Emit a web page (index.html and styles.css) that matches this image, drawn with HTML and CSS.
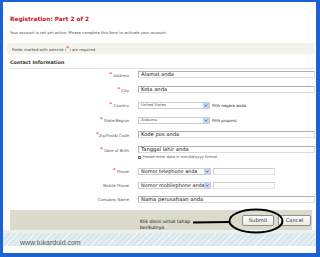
FILE: index.html
```html
<!DOCTYPE html>
<html>
<head>
<meta charset="utf-8">
<link rel="stylesheet" href="styles.css">
</head>
<body>
<div class="page">
  <h1 class="title">Registration: Part 2 of 2</h1>
  <p class="intro">Your account is not yet active. Please complete this form to activate your account.</p>
  <div class="notice">Fields marked with asterisk (<span class="req">*</span>) are required.</div>
  <h2 class="section">Contact Information</h2>
  <div class="form">
    <div class="row r-first"><div class="lbl"><span class="req">*</span> Address</div><div class="field">Alamat anda</div></div>
    <div class="row"><div class="lbl"><span class="req">*</span> City</div><div class="field">Kota anda</div></div>
    <div class="row"><div class="lbl"><span class="req">*</span> Country</div>
      <div class="ctrl"><div class="select s-country"><span class="sv">United States</span><span class="arr"><svg width="6" height="5" viewBox="0 0 6 5"><path d="M1.5 1.8 L3 3.2 L4.5 1.8" fill="none" stroke="#3b62c4" stroke-width="0.9"/></svg></span></div><span class="hint">Pilih negara anda</span></div></div>
    <div class="row"><div class="lbl"><span class="req">*</span> State/Region</div>
      <div class="ctrl"><div class="select s-country"><span class="sv">Alabama</span><span class="arr"><svg width="6" height="5" viewBox="0 0 6 5"><path d="M1.5 1.8 L3 3.2 L4.5 1.8" fill="none" stroke="#3b62c4" stroke-width="0.9"/></svg></span></div><span class="hint">Pilih propinsi</span></div></div>
    <div class="row"><div class="lbl"><span class="req">*</span>Zip/Postal Code</div><div class="field">Kode pos anda</div></div>
    <div class="row"><div class="lbl"><span class="req">*</span> Date of Birth</div><div class="field">Tanggal lahir anda</div></div>
    <div class="row r-note"><div></div><div class="note"><span class="nicon"></span>Please enter date in mm/dd/yyyy format.</div></div>
    <div class="row r-phone"><div class="lbl"><span class="req">*</span> Phone</div>
      <div class="ctrl"><div class="select s-phone"><span class="sv dark">Nomor telephone anda</span><span class="arr"><svg width="6" height="5" viewBox="0 0 6 5"><path d="M1.5 1.8 L3 3.2 L4.5 1.8" fill="none" stroke="#3b62c4" stroke-width="0.9"/></svg></span></div><div class="field f-small"></div></div></div>
    <div class="row"><div class="lbl">Mobile Phone</div>
      <div class="ctrl"><div class="select s-phone"><span class="sv dark">Nomor mobilephone anda</span><span class="arr"><svg width="6" height="5" viewBox="0 0 6 5"><path d="M1.5 1.8 L3 3.2 L4.5 1.8" fill="none" stroke="#3b62c4" stroke-width="0.9"/></svg></span></div><div class="field f-small"></div></div></div>
    <div class="row r-company"><div class="lbl">Company Name</div><div class="field">Nama perusahaan anda</div></div>
  </div>
  <div class="actions">
    <div class="klik">Klik disini untuk tahap<br>berikutnya</div>
    <div class="buttons"><span class="btn b-submit">Submit</span><span class="btn b-cancel">Cancel</span></div>
    <svg class="annot" width="302" height="20" viewBox="0 0 302 20">
      <line x1="183" y1="12.5" x2="220" y2="12" stroke="#000" stroke-width="2"/>
      <ellipse cx="246" cy="11" rx="26.5" ry="11.5" fill="none" stroke="#000" stroke-width="2"/>
    </svg>
  </div>
  <div class="footer">www.tukarduid.com</div>
</div>
</body>
</html>
```
FILE: styles.css
```css
body {
  margin: 0;
  background: #1b62d3;
  font-family: "DejaVu Sans", Verdana, sans-serif;
}
.page {
  margin: 2px 0 0 3px;
  width: 313px;
  height: 251px;
  background: #fff;
  overflow: hidden;
}
.title {
  margin: 0;
  padding: 13px 0 0 7px;
  font-size: 5.8px;
  line-height: 8px;
  font-weight: bold;
  color: #c8141e;
}
.intro {
  margin: 7px 0 0 7px;
  font-size: 3.8px;
  line-height: 6px;
  color: #444;
}
.notice {
  box-sizing: border-box;
  margin: 7px 0 0 4px;
  width: 308px;
  height: 11px;
  padding-left: 5px;
  background: #f3f3ec;
  font-size: 3.8px;
  line-height: 11px;
  color: #444;
}
.section {
  margin: 5px 0 0 7px;
  width: 305px;
  padding-bottom: 2px;
  border-bottom: 1px solid #e2e2d8;
  font-size: 4.8px;
  line-height: 7px;
  font-weight: bold;
  color: #33332a;
}
.req {
  color: #e01010;
  font-size: 5.5px;
  vertical-align: 1px;
}
.row {
  display: grid;
  grid-template-columns: 127px 178px;
  column-gap: 8px;
  height: 7px;
  margin-top: 8px;
}
.r-first { margin-top: 2px; }
.r-note { margin-top: 2px; height: 5px; }
.r-phone { margin-top: 7px; }
.r-company { margin-top: 7px; }
.lbl {
  text-align: right;
  padding-right: 1px;
  font-size: 3.9px;
  line-height: 7px;
  color: #555;
  white-space: nowrap;
}
.lbl .req { line-height: 7px; }
.field {
  box-sizing: border-box;
  width: 177px;
  height: 7px;
  padding-left: 2px;
  border: 1px solid;
  border-color: #b0b0b0 #dcdcdc #dcdcdc #b0b0b0;
  font-size: 5.2px;
  line-height: 5px;
  color: #111;
  white-space: nowrap;
  overflow: hidden;
}
.ctrl {
  display: flex;
  align-items: center;
  gap: 2px;
}
.select {
  box-sizing: border-box;
  display: flex;
  align-items: center;
  height: 7px;
  border: 1px solid #cdcdcd;
  background: #fff;
  overflow: hidden;
}
.s-country { width: 72px; }
.s-phone { width: 73px; }
.sv {
  flex: 1;
  padding-left: 2px;
  font-size: 3.7px;
  line-height: 5px;
  color: #555;
  white-space: nowrap;
  overflow: hidden;
}
.sv.dark {
  font-size: 4.9px;
  color: #111;
}
.arr {
  flex: none;
  display: flex;
  width: 6px;
  height: 5px;
  background: #c6d5f6;
}
.hint {
  font-size: 3.9px;
  color: #222;
  white-space: nowrap;
}
.f-small {
  width: 62px;
  border-color: #cccccc #e2e2e2 #e2e2e2 #cccccc;
}
.note {
  display: flex;
  align-items: center;
  gap: 1.5px;
  font-size: 3.7px;
  line-height: 5px;
  color: #555;
  white-space: nowrap;
}
.nicon {
  box-sizing: border-box;
  width: 3px;
  height: 3px;
  border: 1px solid #666;
  background: #fff;
}
.actions {
  position: relative;
  display: flex;
  margin: 7px 0 0 7px;
  width: 302px;
  height: 20px;
  background: #dbdbcd;
}
.klik {
  margin-left: 130px;
  padding-top: 9px;
  font-size: 4.5px;
  line-height: 6px;
  color: #111;
  white-space: nowrap;
}
.buttons {
  display: flex;
  gap: 4px;
  margin-left: auto;
  padding: 5px 1px 0 0;
}
.btn {
  box-sizing: border-box;
  height: 11px;
  border: 1px solid #8e8e8e;
  border-radius: 2px;
  background: linear-gradient(#ffffff, #ebeae3);
  font-size: 5.2px;
  line-height: 9px;
  text-align: center;
  color: #333;
}
.b-submit { width: 32px; }
.b-cancel { width: 33px; }
.annot {
  position: absolute;
  left: 0;
  top: 0;
  overflow: visible;
}
.footer {
  height: 23px;
  box-sizing: border-box;
  padding: 9px 0 0 17px;
  font-family: "Liberation Sans", Arial, sans-serif;
  font-size: 7px;
  line-height: 8px;
  color: #5a5a5a;
  background:
    linear-gradient(#edf0ea, #edf0ea) 0 0 / 100% 3px no-repeat,
    repeating-linear-gradient(-45deg, #dbe7ef 0 3px, #f1f5f7 3px 4px) 0 3px / 100% 13px no-repeat;
}
```
